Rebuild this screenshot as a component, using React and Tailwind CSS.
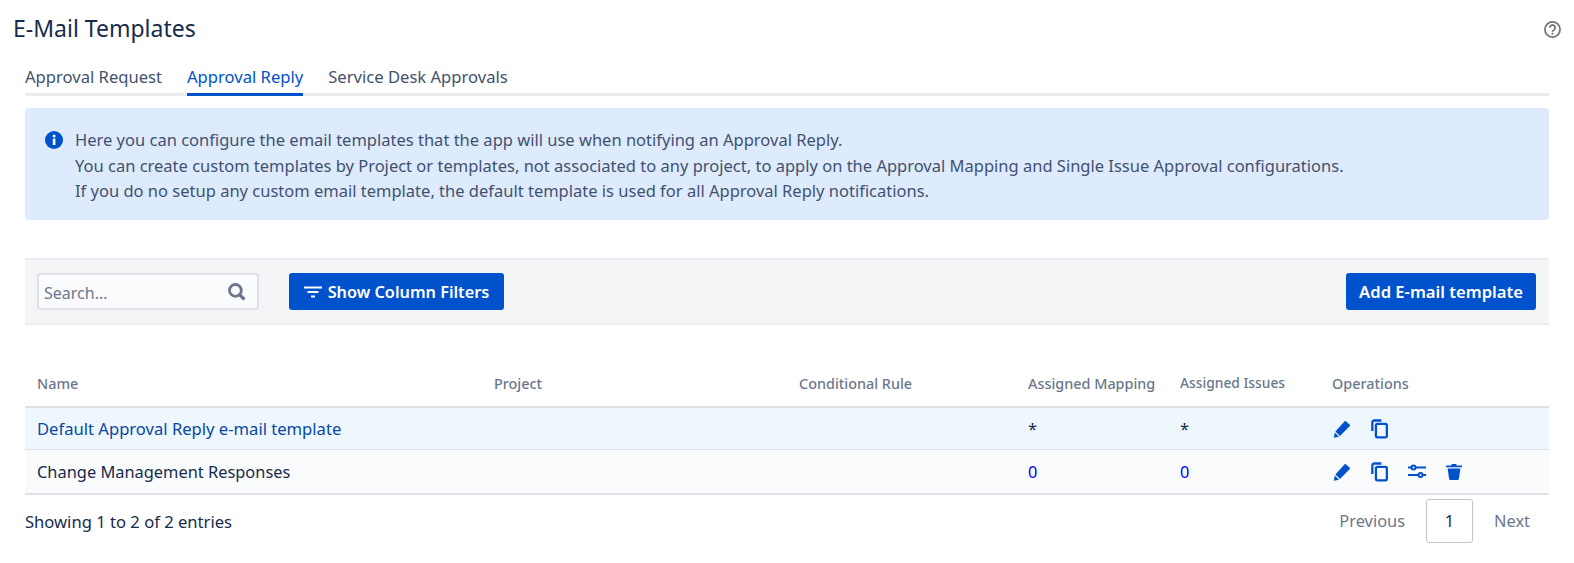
import React from "react";

const font = "font-['Noto_Sans','Open_Sans',sans-serif]";
const cols = "grid grid-cols-[457px_305px_229px_152px_152px_1fr]";

function Pencil() {
  return (
    <svg viewBox="0 0 18 18" className="w-[18px] h-[18px] fill-[#0052cc]">
      <path d="M12.800 1.200 16.800 4.800a.9.9 0 0 1 0 1.300L7 16 2.400 11.400 11.600 1.300a.9.9 0 0 1 1.200-.1Z" />
      <path d="M1.800 12.400 6 16.700.8 17.800Z" />
    </svg>
  );
}

function Copy() {
  return (
    <svg viewBox="0 0 18 20" className="w-[17px] h-[20px] fill-none stroke-[#0052cc] stroke-[2.4px]">
      <path d="M1.400 12V3a2 2 0 0 1 2-2H11" />
      <rect x="5.200" y="4.600" width="11.600" height="14.200" rx="1.600" />
    </svg>
  );
}

function Sliders() {
  return (
    <svg viewBox="0 0 18 15" className="w-[18px] h-[15px] fill-none stroke-[#0052cc] stroke-2">
      <path d="M0 3.500H3.600M7.400 3.500H18M0 11H10.600M14.400 11H18" />
      <circle cx="5.500" cy="3.500" r="2" />
      <circle cx="12.500" cy="11" r="2" />
    </svg>
  );
}

function Trash() {
  return (
    <svg viewBox="0 0 16 16" className="w-4 h-4 fill-[#0052cc]">
      <path d="M5.800 0h4.400l.6 1.600H16v1.600H0V1.600h5.200ZM1.600 4.400h12.800l-1.500 10.300A1.500 1.500 0 0 1 11.400 16H4.600a1.500 1.500 0 0 1-1.500-1.300Z" />
    </svg>
  );
}

function SearchIcon() {
  return (
    <svg viewBox="0 0 18 18" className="w-[18px] h-[18px] fill-none stroke-[#6b778c]">
      <circle cx="7.400" cy="7.400" r="5.900" strokeWidth="2.800" />
      <path d="M11.800 11.800 16.500 16.500" strokeWidth="3.200" />
    </svg>
  );
}

function HelpIcon() {
  return (
    <svg viewBox="0 0 18 18" className="w-[17px] h-[17px] fill-none stroke-[#757575]">
      <circle cx="9" cy="9" r="8" strokeWidth="1.900" />
      <path d="M6.200 7.200a2.800 2.800 0 1 1 4.300 2.300c-1 .6-1.500 1-1.500 2" strokeWidth="2" />
      <path d="M9 12.400v2" strokeWidth="2" />
    </svg>
  );
}

function Row({ name, link, mapping, issues, bg, h, all }) {
  return (
    <div className={`${cols} ${h} items-center text-[16.4px] ${bg}`}>
      <div className={`pl-3 pt-[2px] ${link ? "text-[#0747a6] text-[16.6px]" : "text-[#172b4d]"}`}>{name}</div>
      <div />
      <div />
      <div className={`pl-3 pt-[2px] ${link ? "text-[#172b4d]" : "text-[#0000ee]"}`}>{mapping}</div>
      <div className={`pl-3 pt-[2px] ${link ? "text-[#172b4d]" : "text-[#0000ee]"}`}>{issues}</div>
      <div className="pl-[13px] flex items-center gap-5">
        <Pencil />
        <Copy />
        {all && <Sliders />}
        {all && <Trash />}
      </div>
    </div>
  );
}

export default function App() {
  return (
    <div className={`${font} bg-white w-[1574px] h-[563px] overflow-hidden`}>
      <div className="flex items-center justify-between pl-[13px] pr-[13px] pt-[8px] h-[50px]">
        <h1 className="text-[23px] leading-8 text-[#172b4d] mb-[2px]">E-Mail Templates</h1>
        <HelpIcon />
      </div>

      <div className="ml-[25px] mr-[25px] mt-[14px]">
        <div className="flex gap-[25px] h-[32px] border-b-[3px] border-[#ebecf0] text-[16.6px] text-[#42526e]">
          <div className="leading-[26px]">Approval Request</div>
          <div className="leading-[26px] h-[32px] border-b-[3px] border-[#0052cc] text-[#0052cc]">Approval Reply</div>
          <div className="leading-[26px]">Service Desk Approvals</div>
        </div>

        <div className="mt-[12px] h-[112px] rounded bg-[#deebff] flex gap-[12px] pl-[20px] pt-[19px] text-[16.5px] text-[#42526e] leading-[25.5px]">
          <svg viewBox="0 0 18 18" className="w-[18px] h-[18px] shrink-0 mt-[4px]">
            <circle cx="9" cy="9" r="9" fill="#0052cc" />
            <rect x="7.800" y="7.600" width="2.600" height="6.400" fill="#fff" />
            <circle cx="9.100" cy="5" r="1.500" fill="#fff" />
          </svg>
          <div>
            <p>Here you can configure the email templates that the app will use when notifying an Approval Reply.</p>
            <p>You can create custom templates by Project or templates, not associated to any project, to apply on the Approval Mapping and Single Issue Approval configurations.</p>
            <p>If you do no setup any custom email template, the default template is used for all Approval Reply notifications.</p>
          </div>
        </div>

        <div className="mt-[38px] h-[67px] bg-[#f4f5f7] border-y-2 border-[#ebecf0] flex items-center justify-between pl-3 pr-[13px]">
          <div className="flex items-center gap-[30px]">
            <div className="w-[222px] h-[37px] rounded-[3px] border-2 border-[#dfe1e6] bg-[#fafbfc] flex items-center justify-between pl-[5px] pr-[11px] text-base text-[#6b778c]">
              <span className="pt-[2px]">Search...</span>
              <SearchIcon />
            </div>
            <button className="h-[37px] w-[215px] rounded-[3px] bg-[#0052cc] text-white text-[16.3px] font-semibold flex items-center justify-center gap-[6px]">
              <svg viewBox="0 0 18 12" className="w-[18px] h-3 fill-none stroke-white stroke-2">
                <path d="M0 1.500H18M3.500 6H14.500M7 10.500H11" />
              </svg>
              <span className="pt-[2px]">Show Column Filters</span>
            </button>
          </div>
          <button className="h-[37px] w-[190px] pt-[2px] rounded-[3px] bg-[#0052cc] text-white text-[16.6px] font-semibold">Add E-mail template</button>
        </div>

        <div className={`${cols} mt-[36px] h-[45px] items-center text-[14.4px] font-medium text-[#6b778c]`}>
          <div className="pl-3">Name</div>
          <div className="pl-3">Project</div>
          <div className="pl-3">Conditional Rule</div>
          <div className="pl-3">Assigned Mapping</div>
          <div className="pl-3 text-[13.8px]">Assigned Issues</div>
          <div className="pl-3">Operations</div>
        </div>

        <div className="border-t-2 border-b-2 border-[#dfe1e6] divide-y divide-[#dfe1e6]">
          <Row name="Default Approval Reply e-mail template" link mapping="*" issues="*" bg="bg-[#eff7fe]" h="h-[42px]" />
          <Row name="Change Management Responses" mapping="0" issues="0" bg="bg-[#fafbfc]" h="h-[43px]" all />
        </div>

        <div className="flex items-center justify-between pr-[19px] mt-[4px] text-[16.6px] text-[#172b4d]">
          <div className="pt-[2px]">Showing 1 to 2 of 2 entries</div>
          <div className="flex items-center gap-[21px] text-[16.4px] text-[#6b778c]">
            <span>Previous</span>
            <span className="w-[47px] h-[44px] flex items-center justify-center rounded-[3px] border border-[#c1c7d0] text-[#172b4d]">1</span>
            <span>Next</span>
          </div>
        </div>
      </div>
    </div>
  );
}
